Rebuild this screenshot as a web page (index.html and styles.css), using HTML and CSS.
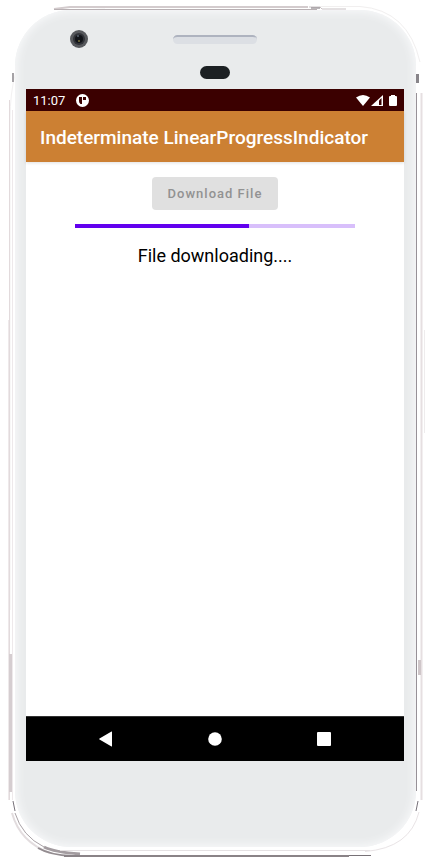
FILE: index.html
```
<!DOCTYPE html>
<html lang="en">
<head>
    <meta charset="UTF-8">
    <meta name="viewport" content="width=device-width, initial-scale=1.0">
    <title>Indeterminate LinearProgressIndicator</title>
    <link rel="stylesheet" href="styles.css">
</head>
<body>
    <div class="phone">
        <!-- thin metal edge around the phone -->
        <svg class="edge" viewBox="0 0 425 862" preserveAspectRatio="none" fill="none" aria-hidden="true">
            <path d="M10 610V120Q10 9 105 9" stroke="#f3f1f2"/>
            <path d="M54 9L70 7H308" stroke="#d3cbcd" stroke-width="2"/>
            <path d="M54 9.500H317" stroke="#b8b0b3"/>
            <path d="M309 7H320L322 9H346" stroke="#c9c2c5"/>
            <path d="M311 8H320" stroke="#77707580" stroke-width="2"/>
            <path d="M320 6.500H360Q408 10 420 62" stroke="#f1efef"/>
            <path d="M13 73V82" stroke="#a5a2a6" stroke-width="2"/>
            <path d="M8.500 320V800" stroke="#eee9ea"/>
            <path d="M9.500 100V800" stroke="#e2dadc"/>
            <path d="M12.500 110V800" stroke="#eee9eb"/>
            <path d="M10.500 654V792" stroke="#d5cdd0" stroke-width="3"/>
            <path d="M13 801L15 811" stroke="#77727a"/>
            <path d="M12 813Q20 842 50 853" stroke="#e2dcde" stroke-width="2"/>
            <path d="M15 813Q22 836 44 847" stroke="#aaa3a7"/>
            <path d="M44 847Q54 852 80 854" stroke="#a39ca0" stroke-width="3"/>
            <path d="M38 848Q50 855 72 856" stroke="#938c90" stroke-width="2"/>
            <path d="M60 850.500H370" stroke="#e5e1e3"/>
            <path d="M64 856H349" stroke="#8a8387" stroke-width="2"/>
            <path d="M349 855.500H371" stroke="#777176"/>
            <path d="M365 851.500Q410 848 419 812" stroke="#e9e4e6"/>
            <path d="M417.500 74V83" stroke="#88858a" stroke-width="3"/>
            <path d="M416.500 93V791" stroke="#979197"/>
            <path d="M421.500 93V800" stroke="#e6dfe1" stroke-width="2"/>
            <path d="M419.500 660V675" stroke="#cfc6c9" stroke-width="3"/>
            <path d="M424.500 330V433" stroke="#eeeced"/>
            <path d="M418 801L416 811" stroke="#77727a"/>
        </svg>

        <div class="face">
            <div class="top">
                <svg class="camera" viewBox="0 0 18 18" aria-hidden="true">
                    <circle cx="9" cy="9" r="9" fill="#57595d"/>
                    <circle cx="9" cy="9" r="6" fill="#303238"/>
                    <circle cx="9" cy="9" r="4" fill="#111318"/>
                    <circle cx="8" cy="6" r="1" fill="#56606c"/>
                    <circle cx="9" cy="11" r="1" fill="#77703c"/>
                </svg>
                <div class="speaker"></div>
                <div class="sensor"></div>
            </div>

            <div class="screen">
                <div class="status-bar">
                    <span class="time">11:07</span>
                    <svg class="app-icon" viewBox="0 0 13 13" aria-hidden="true">
                        <circle cx="6.500" cy="6.500" r="6.500" fill="#fff"/>
                        <path d="M3 3h3v7H4.500Q3 9 3 7zM7 3h3v3H7z" fill="#3b0000"/>
                    </svg>
                    <svg class="status-icons" viewBox="0 0 42 13" fill="#fff" aria-hidden="true">
                        <path d="M1 3.500Q8 -1.500 15 3.500L8 12z"/>
                        <path d="M16 12L28 1v11z"/>
                        <path d="M24 6.500L26.500 4v7H24z" fill="#3b0000"/>
                        <path d="M36 1h4v1h1q1 0 1 1v8q0 1-1 1h-6q-1 0-1-1V3q0-1 1-1h1z"/>
                    </svg>
                </div>

                <header class="app-bar">
                    <h1>Indeterminate LinearProgressIndicator</h1>
                </header>

                <main class="content">
                    <button class="download" type="button" disabled>Download File</button>
                    <progress class="progress" value="62" max="100" aria-labelledby="message"></progress>
                    <p class="message" id="message">File downloading....</p>
                </main>

                <nav class="nav-bar">
                    <button type="button" aria-label="Back">
                        <svg viewBox="0 0 16 16" fill="#fff"><path d="M1.500 7.500L13.500 .500q.5-.3.500.3v14.400q0 .6-.5.300L1.500 8.500q-.8-.5 0-1z"/></svg>
                    </button>
                    <button type="button" aria-label="Home">
                        <svg viewBox="0 0 16 16" fill="#fff"><circle cx="8" cy="8" r="6.800"/></svg>
                    </button>
                    <button type="button" aria-label="Recent apps">
                        <svg viewBox="0 0 16 16" fill="#fff"><rect x="1" y="1" width="14" height="14" rx="1"/></svg>
                    </button>
                </nav>
            </div>
        </div>
    </div>
</body>
</html>
```
FILE: styles.css
```
* {
    box-sizing: border-box;
}
body {
    margin: 0;
    font-family: Roboto, "Liberation Sans", sans-serif;
    background: #fff;
}

/* Phone */
.phone {
    position: relative;
    display: flex;
    min-height: 100vh;
    padding: 10px 9px 15px 15px;
}
.edge {
    position: absolute;
    top: 0;
    left: 0;
    width: 100%;
    height: 100%;
}
.face {
    position: relative;
    flex: 1;
    display: flex;
    flex-direction: column;
    padding: 0 12px 86px 11px;
    border-radius: 56px;
    background: #e9ebec;
    box-shadow: inset 0 0 8px 2px #f8f9fa;
}
.top {
    display: grid;
    grid-template-columns: 1fr auto 1fr;
    grid-template-rows: 38px 41px;
    align-items: center;
    justify-items: center;
}
.camera {
    width: 18px;
    height: 18px;
    margin: 20px 0 0 44px;
    justify-self: start;
}
.speaker {
    width: 84px;
    height: 9px;
    margin-top: 20px;
    border-top: 2px solid #aeb3bf;
    border-radius: 5px;
    background: #dcdfe4;
}
.sensor {
    grid-column: 2;
    width: 30px;
    height: 13px;
    margin-top: 8px;
    border-radius: 7px;
    background: #1c2023;
}

/* Screen */
.screen {
    flex: 1;
    display: flex;
    flex-direction: column;
    background: #fff;
}
.status-bar {
    display: flex;
    align-items: center;
    height: 22px;
    padding: 0 7px;
    background: #3b0000;
    color: #fff;
}
.time {
    font-size: 13px;
}
.app-icon {
    width: 13px;
    height: 13px;
    margin-left: 11px;
}
.status-icons {
    width: 42px;
    height: 13px;
    margin-left: auto;
}
.app-bar {
    display: flex;
    align-items: center;
    height: 51px;
    padding: 2px 14px 0;
    background: #cc8033;
    box-shadow: 0 1px 3px rgba(0, 0, 0, 0.12);
}
.app-bar h1 {
    margin: 0;
    font-size: 19px;
    font-weight: 500;
    color: #fff;
    white-space: nowrap;
}
.content {
    flex: 1;
    display: flex;
    flex-direction: column;
    align-items: center;
    padding-top: 15px;
}
.download {
    height: 33px;
    padding: 0 16px;
    border: none;
    border-radius: 4px;
    background: #e0e0e0;
    color: #929292;
    font-family: inherit;
    font-size: 13px;
    font-weight: 500;
    letter-spacing: 1px;
}
.progress {
    appearance: none;
    width: 74%;
    height: 4px;
    margin: 14px 0 16px;
    border: none;
    background: #d8bffb;
}
.progress::-webkit-progress-bar {
    background: #d8bffb;
}
.progress::-webkit-progress-value {
    background: #6200ee;
}
.message {
    margin: 0;
    font-size: 18px;
    line-height: 24px;
    color: #000;
}

/* Navigation */
.nav-bar {
    display: flex;
    justify-content: space-around;
    height: 45px;
    padding: 0 25px;
    border-top: 1px solid #333;
    background: #000;
}
.nav-bar button {
    padding: 0 8px;
    border: none;
    background: none;
}
.nav-bar svg {
    display: block;
    width: 16px;
    height: 16px;
}
```
